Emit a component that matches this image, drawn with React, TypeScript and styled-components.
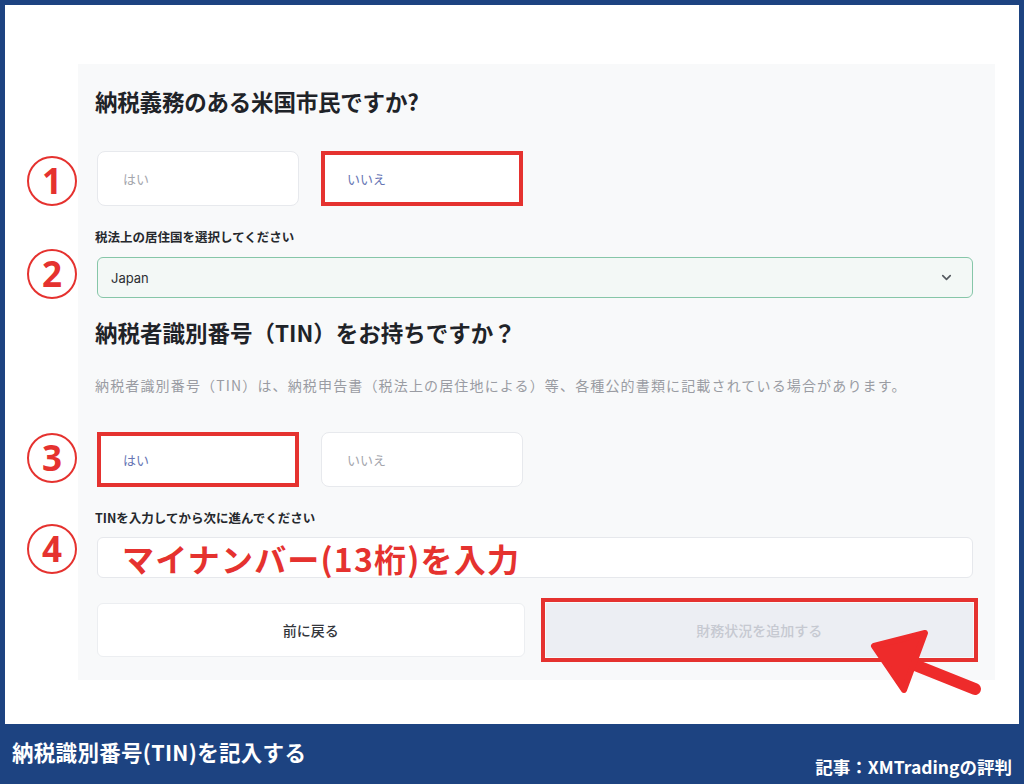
import styled, { createGlobalStyle } from 'styled-components'
import { ChevronDown } from 'lucide-react'

const GlobalStyle = createGlobalStyle`
    html, body {
        margin: 0;
        padding: 0;
        background: #1d4381;
    }
    * {
        box-sizing: border-box;
    }
`

const jp = `"Noto Sans CJK JP", "Noto Sans", sans-serif`
const ui = `"Inter", "Noto Sans CJK JP", sans-serif`
const red = '#e5322f'

const Frame = styled.div`
    width: 1024px;
    height: 784px;
    background: #1d4381;
    display: flex;
    flex-direction: column;
    padding: 5px 5px 0 5px;
`

const Panel = styled.div`
    position: relative;
    height: 719px;
    background: #ffffff;
    padding: 59px 0 0 73px;
`

const Card = styled.div`
    width: 917px;
    height: 616px;
    background: #f8f9fa;
    padding: 22px 22px 0 19px;
    display: flex;
    flex-direction: column;
    font-family: ${ui};
`

const Heading = styled.h2<{ $top: number; $spacing?: number }>`
    margin: ${p => p.$top}px 0 0 -2px;
    font-family: ${jp};
    font-size: 22.5px;
    font-weight: 600;
    line-height: 30px;
    color: #1f2328;
    letter-spacing: ${p => p.$spacing ?? 0}px;
`

const Description = styled.p`
    margin: 28px 0 0 -2px;
    font-family: ${jp};
    font-size: 14px;
    line-height: 20px;
    letter-spacing: 1.15px;
    color: #9a9ca3;
`

const Label = styled.div<{ $top: number }>`
    margin: ${p => p.$top}px 0 0 -2px;
    font-family: ${jp};
    font-size: 12.5px;
    font-weight: 600;
    line-height: 18px;
    color: #25282d;
`

const Field = styled.div<{ $top: number }>`
    position: relative;
    margin-top: ${p => p.$top}px;
`

const ChoiceRow = styled.div`
    display: flex;
    gap: 22px;
`

const Choice = styled.button<{ $marked?: boolean; $selected?: boolean }>`
    width: 202px;
    height: 55px;
    text-align: left;
    background: #ffffff;
    border: ${p => (p.$marked ? `4px solid ${red}` : '1px solid #e7e9ed')};
    border-radius: ${p => (p.$marked ? '0' : '8px')};
    padding: 0 0 0 ${p => (p.$marked ? '22px' : '25px')};
    font-family: ${jp};
    font-size: 13px;
    color: ${p => (p.$selected ? '#6675b4' : '#a4a6ad')};
    cursor: pointer;
`

const Select = styled.div`
    height: 41px;
    border: 1px solid #86c6a8;
    border-radius: 6px;
    background: #f3f8f6;
    display: flex;
    align-items: center;
    justify-content: space-between;
    padding: 0 18px 0 13px;
    font-size: 13px;
    color: #2c2f33;
`

const TextField = styled.div`
    height: 41px;
    border: 1px solid #e6e8ec;
    border-radius: 6px;
    background: #ffffff;
    display: flex;
    align-items: center;
    padding-left: 24px;
`

const Annotation = styled.span`
    font-family: ${jp};
    font-size: 32px;
    font-weight: 700;
    line-height: 1;
    color: ${red};
    letter-spacing: 1.2px;
    white-space: nowrap;
`

const Actions = styled.div`
    margin-top: 25px;
    display: grid;
    grid-template-columns: 1fr 1fr;
    gap: 21px;
`

const ActionButton = styled.button<{ $primary?: boolean }>`
    height: 54px;
    border: 1px solid #eceef1;
    border-radius: ${p => (p.$primary ? '0' : '6px')};
    background: ${p => (p.$primary ? '#eceef3' : '#ffffff')};
    outline: ${p => (p.$primary ? `4px solid ${red}` : 'none')};
    outline-offset: 1px;
    font-family: ${jp};
    font-size: 14px;
    font-weight: 500;
    color: ${p => (p.$primary ? '#c6c9d1' : '#33363b')};
`

const Marker = styled.span<{ $shift?: number }>`
    position: absolute;
    left: -70px;
    top: 50%;
    transform: translateY(calc(-50% + ${p => p.$shift ?? 0}px));
    width: 50px;
    height: 50px;
    border: 2px solid ${red};
    border-radius: 50%;
    display: flex;
    align-items: center;
    justify-content: center;
    font-family: "Open Sans", "Noto Sans", sans-serif;
    font-size: 35px;
    font-weight: 700;
    line-height: 1;
    color: ${red};
    background: #ffffff;
`

const Arrow = styled.svg`
    position: absolute;
    left: 0;
    top: 0;
    pointer-events: none;
`

const Footer = styled.div`
    height: 60px;
    display: flex;
    justify-content: space-between;
    padding: 0 7px 0 7px;
    color: #ffffff;
    font-family: ${jp};
    font-weight: 700;
`

const Caption = styled.div`
    font-size: 21.5px;
    line-height: 1;
    margin-top: 17px;
    letter-spacing: 0.3px;
`

const Credit = styled.div`
    font-size: 17.5px;
    line-height: 1;
    align-self: flex-end;
    margin-bottom: 9px;
`

export default function App() {
    return (
        <>
            <GlobalStyle />
            <Frame>
                <Panel>
                    <Card>
                        <Heading $top={0} $spacing={-0.2}>納税義務のある米国市民ですか?</Heading>

                        <Field $top={35}>
                            <Marker $shift={2}>1</Marker>
                            <ChoiceRow>
                                <Choice>はい</Choice>
                                <Choice $marked $selected>いいえ</Choice>
                            </ChoiceRow>
                        </Field>

                        <Label $top={22}>税法上の居住国を選択してください</Label>
                        <Field $top={11}>
                            <Marker $shift={-4}>2</Marker>
                            <Select>
                                <span>Japan</span>
                                <ChevronDown size={15} strokeWidth={2.6} color="#555a60" />
                            </Select>
                        </Field>

                        <Heading $top={19}>納税者識別番号（TIN）をお持ちですか？</Heading>
                        <Description>
                            納税者識別番号（TIN）は、納税申告書（税法上の居住地による）等、各種公的書類に記載されている場合があります。
                        </Description>

                        <Field $top={37}>
                            <Marker $shift={-2}>3</Marker>
                            <ChoiceRow>
                                <Choice $marked $selected>はい</Choice>
                                <Choice>いいえ</Choice>
                            </ChoiceRow>
                        </Field>

                        <Label $top={22}>TINを入力してから次に進んでください</Label>
                        <Field $top={10}>
                            <Marker $shift={-9}>4</Marker>
                            <TextField>
                                <Annotation>マイナンバー(13桁)を入力</Annotation>
                            </TextField>
                        </Field>

                        <Actions>
                            <ActionButton>前に戻る</ActionButton>
                            <ActionButton $primary>財務状況を追加する</ActionButton>
                        </Actions>
                    </Card>

                    <Arrow width="1014" height="719" viewBox="0 0 1014 719">
                        <g transform="translate(-5,-5)">
                            <line x1="910" y1="663" x2="975" y2="689" stroke="#ee2b2b" strokeWidth="12" strokeLinecap="round" />
                            <polygon
                                points="874,646 925,633 904,690"
                                fill="#ee2b2b"
                                stroke="#ee2b2b"
                                strokeWidth="6"
                                strokeLinejoin="round"
                            />
                        </g>
                    </Arrow>
                </Panel>
                <Footer>
                    <Caption>納税識別番号(TIN)を記入する</Caption>
                    <Credit>記事：XMTradingの評判</Credit>
                </Footer>
            </Frame>
        </>
    )
}
